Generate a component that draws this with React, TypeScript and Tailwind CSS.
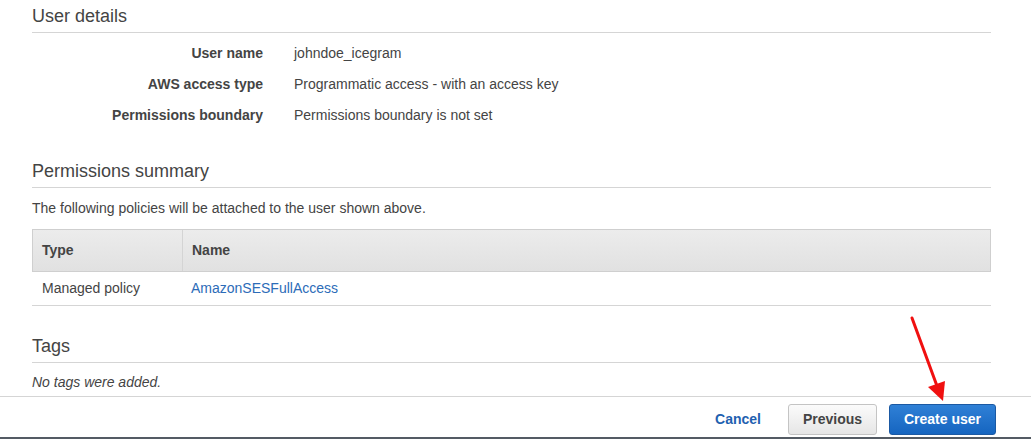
import React from 'react';

const details = [
  { label: 'User name', value: 'johndoe_icegram' },
  { label: 'AWS access type', value: 'Programmatic access - with an access key' },
  { label: 'Permissions boundary', value: 'Permissions boundary is not set' },
];

function SectionHeading({ title }: { title: string }) {
  return (
    <div className="h-[33px] border-b border-[#d5d5d5] pt-[1px] text-[18px] leading-[30px] text-[#444]">
      {title}
    </div>
  );
}

function PointerArrow() {
  // red callout arrow pointing at the primary action
  return (
    <svg
      className="pointer-events-none absolute left-0 top-0"
      width="1031"
      height="439"
      viewBox="0 0 1031 439"
    >
      <line x1="912" y1="318" x2="937" y2="386" stroke="#f01010" strokeWidth="3" strokeLinecap="round" />
      <polygon points="943,401 928,387 945,381" fill="#f01010" />
    </svg>
  );
}

export default function App() {
  return (
    <div
      className="relative h-[439px] w-[1031px] overflow-hidden bg-white text-[14px] text-[#444]"
      style={{ fontFamily: '"Liberation Sans", Arial, sans-serif' }}
    >
      <div className="ml-[32px] w-[959px]">
        {/* User details */}
        <SectionHeading title="User details" />
        <div className="mt-[5px]">
          {details.map((d) => (
            <div key={d.label} className="flex h-[31px] items-center">
              <div className="w-[231px] text-right font-bold">{d.label}</div>
              <div className="ml-[31px]">{d.value}</div>
            </div>
          ))}
        </div>

        {/* Permissions summary */}
        <div className="mt-[24px]">
          <SectionHeading title="Permissions summary" />
        </div>
        <p className="mt-[10px] leading-[20px]">The following policies will be attached to the user shown above.</p>
        <div className="mt-[11px]">
          <div className="flex h-[43px] items-center border border-[#cfcfcf] bg-gradient-to-b from-[#ececec] to-[#e1e1e1] font-bold">
            <div className="flex h-full w-[150px] items-center border-r border-[#d4d4d4] pl-[9px]">Type</div>
            <div className="pl-[9px]">Name</div>
          </div>
          <div className="flex h-[34px] items-center border-b border-[#d5d5d5]">
            <div className="w-[150px] pl-[10px]">Managed policy</div>
            <div className="pl-[9px] text-[#2c6cb8]">AmazonSESFullAccess</div>
          </div>
        </div>

        {/* Tags */}
        <div className="mt-[24px]">
          <SectionHeading title="Tags" />
        </div>
        <p className="mt-[9px] leading-[20px] italic">No tags were added.</p>
      </div>

      {/* Wizard footer */}
      <div className="mt-[4px] flex h-[43px] items-center justify-end border-t border-[#d5d5d5] border-b-2 border-b-[#545b64] pr-[35px] pt-[4px]">
        <button className="mr-[27px] font-bold text-[#1f61b0]">Cancel</button>
        <button className="h-[31px] w-[89px] rounded-[3px] border border-[#c4c4c4] bg-gradient-to-b from-[#fbfbfb] to-[#e6e6e6] font-bold text-[#444]">
          Previous
        </button>
        <button className="ml-[12px] h-[31px] w-[107px] rounded-[3px] border border-[#1b59a3] bg-gradient-to-b from-[#2f80d6] to-[#1565c0] font-bold text-white">
          Create user
        </button>
      </div>

      <PointerArrow />
    </div>
  );
}
